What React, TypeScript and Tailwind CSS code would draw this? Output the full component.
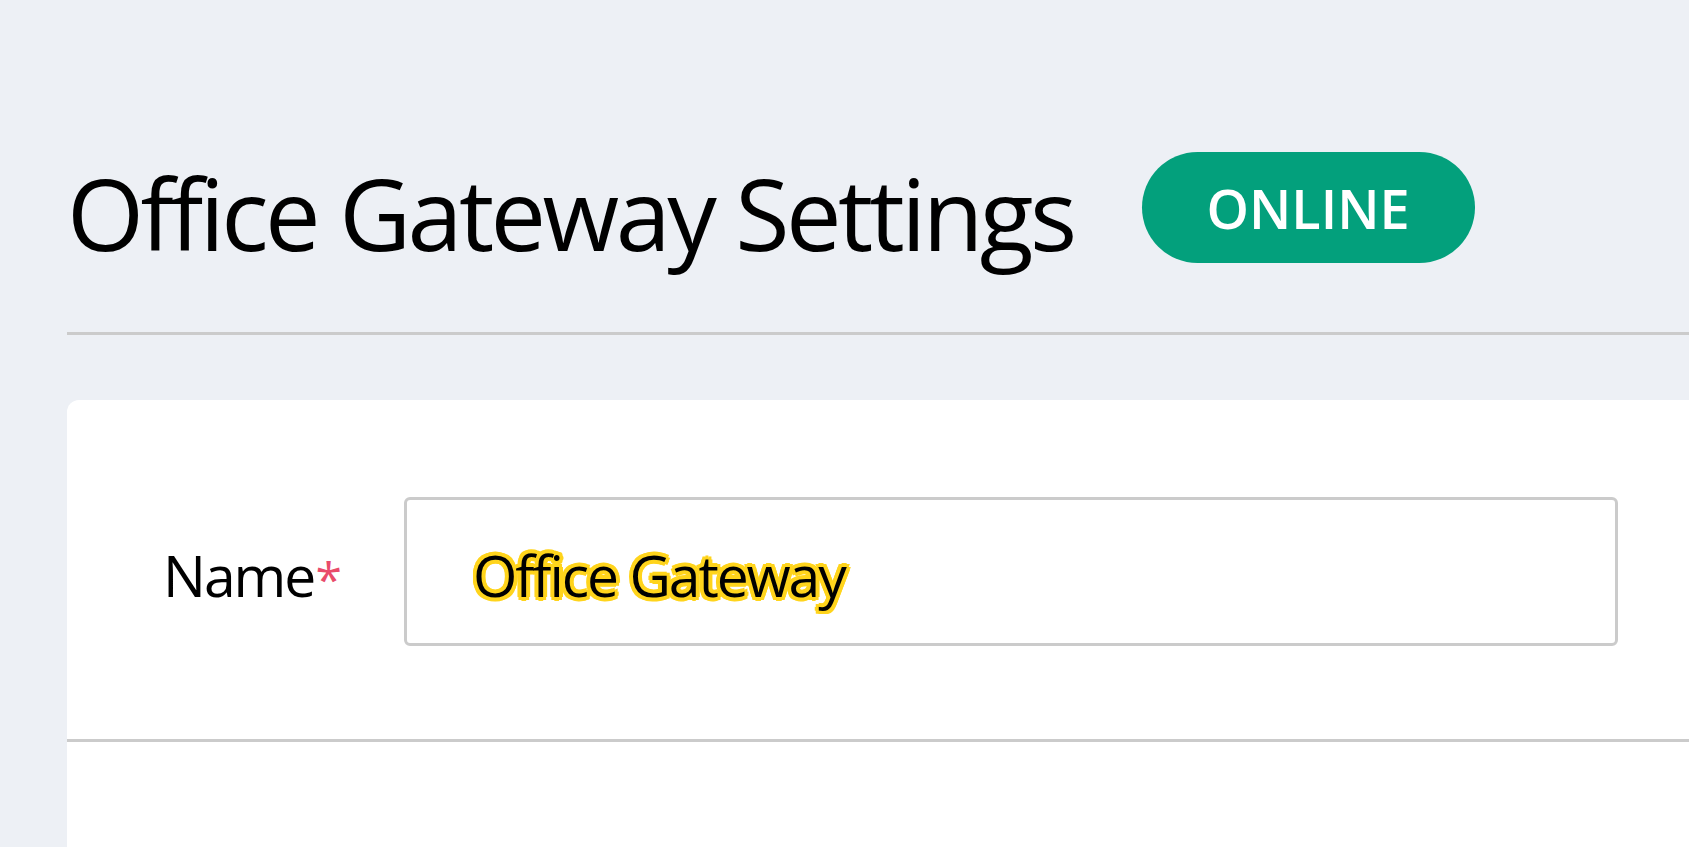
import React from 'react';

const outline =
  '[text-shadow:4px_0_#ffd41c,-4px_0_#ffd41c,0_4px_#ffd41c,0_-4px_#ffd41c,3px_3px_#ffd41c,-3px_-3px_#ffd41c,3px_-3px_#ffd41c,-3px_3px_#ffd41c,2px_0_#ffd41c,-2px_0_#ffd41c]';

const App: React.FC = () => {
  return (
    <div className="min-h-screen h-[847px] overflow-hidden bg-[#edf0f5] pl-[67px] pt-[152px] font-['Open_Sans',sans-serif] text-black">
      {/* Header */}
      <div className="flex items-center h-[111px]">
        <h1 className="pt-[9px] text-[99px] leading-none font-normal tracking-[-3.6px]">Office Gateway Settings</h1>
        <span className="ml-[68px] flex items-center justify-center h-[111px] w-[333px] rounded-full bg-[#03a07c] text-white text-[54px] font-semibold leading-none">
          ONLINE
        </span>
      </div>
      <div className="mt-[69px] h-[3px] bg-[#cbcbcb]" />

      {/* Card */}
      <div className="mt-[65px] bg-white rounded-tl-[12px] h-[447px] pt-[97px]">
        <div className="flex items-center">
          <label className="w-[337px] pl-[96px] pt-[8px] text-[57px] leading-none tracking-[-2px]">
            Name<span className="text-[#e94b6b] text-[48px] ml-[1px]">*</span>
          </label>
          <input
            readOnly
            value="Office Gateway"
            className={`w-[1214px] h-[149px] border-[3px] border-[#cbcbcb] rounded-[6px] pl-[66px] pt-[6px] text-[57px] tracking-[-2.1px] outline-none ${outline}`}
          />
        </div>
        <div className="mt-[93px] h-[3px] bg-[#cbcbcb]" />
      </div>
    </div>
  );
};

export default App;
